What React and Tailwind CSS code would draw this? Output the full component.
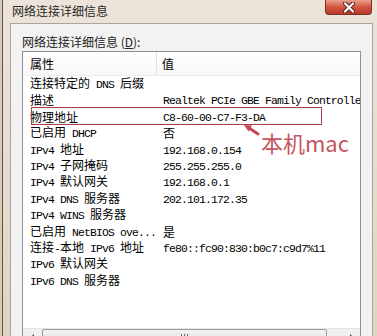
import React from 'react';

const rows = [
  ['连接特定的 DNS 后缀', ''],
  ['描述', 'Realtek PCIe GBE Family Controller'],
  ['物理地址', 'C8-60-00-C7-F3-DA'],
  ['已启用 DHCP', '否'],
  ['IPv4 地址', '192.168.0.154'],
  ['IPv4 子网掩码', '255.255.255.0'],
  ['IPv4 默认网关', '192.168.0.1'],
  ['IPv4 DNS 服务器', '202.101.172.35'],
  ['IPv4 WINS 服务器', ''],
  ['已启用 NetBIOS ove...', '是'],
  ['连接-本地 IPv6 地址', 'fe80::fc90:830:b0c7:c9d7%11'],
  ['IPv6 默认网关', ''],
  ['IPv6 DNS 服务器', ''],
];

// ASCII runs get a narrow mono face, like SimSun's half-width glyphs
const Mixed = ({ text }) =>
  text
    .split(/([\x20-\x7e]+)/)
    .filter(Boolean)
    .map((p, i) =>
      /^[\x20-\x7e]+$/.test(p) ? (
        <span key={i} className="font-['Liberation_Mono',monospace] text-[11.4px] tracking-[-0.84px] whitespace-pre">
          {p}
        </span>
      ) : (
        <span key={i}>{p}</span>
      )
    );

const App = () => {
  return (
    <div className="relative w-[377px] h-[336px] overflow-hidden bg-[#dacbb9] font-['Noto_Sans_CJK_SC',sans-serif] text-[12px] text-black">
      <div className="ml-[2px] h-full border-l border-[#5e544b] bg-gradient-to-b from-[#ece4da] to-[#e0d3c3] flex flex-col">
        {/* Title bar */}
        <div className="h-[23px] flex items-start shrink-0">
          <span className="pl-[9px] pt-[3px] leading-[16px] text-[#2a2a2a]">网络连接详细信息</span>
          <div className="ml-auto mr-[5px] w-[47px] h-[15px] rounded-b-[4px] border border-t-0 border-[#7e3026] bg-gradient-to-b from-[#e9a08e] via-[#d2553f] to-[#b8392a] flex items-center justify-center">
            <svg width="14" height="11" viewBox="0 0 14 11">
              <path d="M3 1.5 L11 9.5 M11 1.5 L3 9.5" stroke="#5a2018" strokeWidth="4" strokeLinecap="round" />
              <path d="M3 1.5 L11 9.5 M11 1.5 L3 9.5" stroke="#ffffff" strokeWidth="2.2" strokeLinecap="round" />
            </svg>
          </div>
        </div>

        {/* Panel */}
        <div className="ml-[7px] w-[363px] flex-1 border border-[#a9a49d] bg-[#f2f2f2] pl-[11px]">
          <div className="pt-[10px] leading-[16px] text-[#222]">
            网络连接详细信息 (<span className="underline">D</span>):
          </div>
          <div className="mt-[1px] w-[339px] border border-[#8e8f94] bg-white">
            {/* Header */}
            <div className="h-[24px] flex items-center bg-gradient-to-b from-white to-[#f7f7f7] border-b border-[#ececec]">
              <div className="w-[134px] h-full pl-[7px] flex items-center border-r border-[#e2e2e2]">属性</div>
              <div className="pl-[5px]">值</div>
            </div>
            {/* Rows */}
            <div className="h-[252px]">
              {rows.map(([name, value]) => (
                <div key={name} className="h-[16.4px] leading-[16.4px] flex items-center whitespace-nowrap">
                  <div className="w-[134px] pl-[7px] overflow-hidden">
                    <Mixed text={name} />
                  </div>
                  <div className="pl-[6px] flex-1 overflow-hidden">
                    <Mixed text={value} />
                  </div>
                </div>
              ))}
            </div>
            {/* Horizontal scrollbar */}
            <div className="h-[17px] flex items-stretch bg-[#f0f0f0] border-t border-[#e6e6e6]">
              <div className="w-[18px] flex items-center justify-center">
                <svg width="5" height="7" viewBox="0 0 5 7"><path d="M4 0 L0 3.5 L4 7 Z" fill="#555" /></svg>
              </div>
              <div className="ml-[1px] w-[285px] rounded-[2px] border border-[#9a9a9a] bg-gradient-to-b from-[#f4f4f4] to-[#dcdcdc] flex items-center justify-center gap-[2px]">
                <div className="w-[1px] h-[7px] bg-[#666]" />
                <div className="w-[1px] h-[7px] bg-[#666]" />
                <div className="w-[1px] h-[7px] bg-[#666]" />
              </div>
              <div className="flex-1" />
              <div className="w-[17px] flex items-center justify-center">
                <svg width="5" height="7" viewBox="0 0 5 7"><path d="M1 0 L5 3.5 L1 7 Z" fill="#555" /></svg>
              </div>
            </div>
          </div>
        </div>
      </div>

      {/* Annotation overlay */}
      <div className="absolute left-[31px] top-[107px] w-[291px] h-[18px] border border-[#a8404a]" />
      <svg className="absolute left-[240px] top-[122px]" width="22" height="14" viewBox="0 0 22 14">
        <path d="M18 12 L9 6" stroke="#c94556" strokeWidth="3" strokeLinecap="round" />
        <path d="M4 3 L12 3.5 L8.5 9.5 Z" fill="#c94556" />
      </svg>
      <div className="absolute left-[261px] top-[129px] text-[22px] leading-[26px] text-[#c65562]">本机mac</div>
    </div>
  );
};

export default App;
